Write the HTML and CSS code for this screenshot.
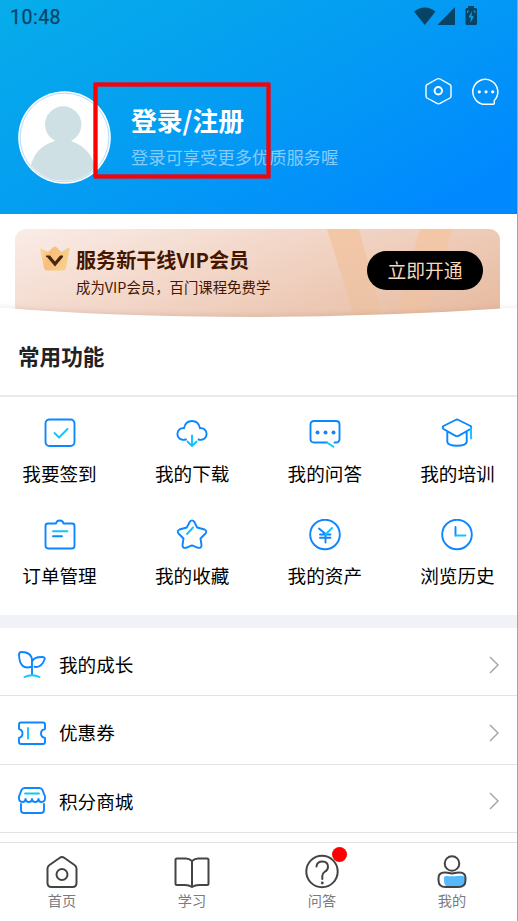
FILE: index.html
```html
<!DOCTYPE html>
<html lang="zh-CN">
<head>
<meta charset="utf-8">
<title>我的</title>
<link rel="stylesheet" href="styles.css">
</head>
<body>
<div class="phone">
  <header class="hero">
    <div class="status">
      <span class="clock">10:48</span>
      <svg class="status-icons" width="66" height="20" viewBox="0 0 66 20" fill="#064365">
        <path d="M0 4.500Q11 -3.500 21.500 4.500L10.800 18Z"/>
        <path d="M23.500 18L41 0V18Z"/>
        <path d="M54 1V-1H60V1H61.500Q63 1 63 2.500V16.500Q63 18 61.500 18H53Q51.500 18 51.500 16.500V2.500Q51.500 1 53 1Z"/>
        <path d="M58 4L54.500 10.500H57L56.300 16L60 9.200H57.500Z" fill="#08a0f2"/>
        <path d="M53.500 6V4H55M59.500 4H61V6" fill="none" stroke="#08a0f2"/>
      </svg>
    </div>
    <div class="tools">
      <svg width="28" height="29" viewBox="0 0 28 29" fill="none" stroke="#fff" stroke-width="1.400" stroke-linejoin="round">
        <path d="M12 2Q13.500 1.200 15 2L25 7.600Q26 8.300 26 9.500V19Q26 20.300 25 21L15 26.400Q13.500 27.200 12 26.400L2 21Q1 20.300 1 19V9.500Q1 8.300 2 7.600Z"/>
        <circle cx="13.300" cy="13.800" r="3.700" stroke-width="2"/>
      </svg>
      <svg width="28" height="29" viewBox="0 0 28 29" fill="none" stroke="#fff" stroke-width="1.500" stroke-linejoin="round">
        <path d="M22.300 23.500A12.500 12.500 0 1 0 14 27.300H21.300Q22.300 27.300 22.300 26.300Z"/>
        <g fill="#fff" stroke="none"><circle cx="7.300" cy="14.800" r="1.600"/><circle cx="14" cy="14.800" r="1.600"/><circle cx="20.700" cy="14.800" r="1.600"/></g>
      </svg>
    </div>
    <div class="profile">
      <svg class="avatar" width="93" height="93" viewBox="0 0 93 93">
        <defs><clipPath id="face"><circle cx="46.500" cy="46.500" r="43.500"/></clipPath></defs>
        <circle cx="46.500" cy="46.500" r="46.300" fill="#fff"/>
        <circle cx="46.500" cy="46.500" r="44.400" fill="none" stroke="#8dccf5" stroke-width=".7"/>
        <g clip-path="url(#face)" fill="#cfe0e5"><circle cx="45.200" cy="33.500" r="18.200"/><path d="M37 46H53V50Q76 58 77.500 82V93H12V78Q16 56 37 50Z"/></g>
      </svg>
      <div class="login">
        <div class="login-title">登录/注册</div>
        <div class="login-sub">登录可享受更多优质服务喔</div>
      </div>
    </div>
    <div class="highlight"></div>
  </header>

  <section class="promo">
    <div class="vip">
      <svg class="ribbon" width="130" height="90" viewBox="0 0 130 90">
        <defs><linearGradient id="rb" x2="0" y2="1"><stop stop-color="#f3c7a6"/><stop offset="1" stop-color="#ecc0a1" stop-opacity=".65"/></linearGradient></defs>
        <path d="M0 0H32L56 90H28Z" fill="url(#rb)"/><path d="M93 0H126L98 90H68Z" fill="url(#rb)"/>
      </svg>
      <svg class="crown" width="30" height="25" viewBox="0 0 30 25">
        <defs><linearGradient id="cr" x2="1" y2=".3"><stop stop-color="#fbdf9f"/><stop offset=".4" stop-color="#f9bd7b"/><stop offset="1" stop-color="#f5d08a"/></linearGradient></defs>
        <path d="M0 3.500Q0 2 1.500 2.500L8 6L13.500 1Q15 0 16.300 1L21.500 6L28 2Q30 1.500 29.500 3.500L26 22Q25.500 24.500 23 24.500H7Q4.500 24.500 4 22Z" fill="url(#cr)"/>
        <path d="M6 9.500H10L15 15.500L20 9.500H23V11L15 20.500L7 11H6Z" fill="#4b2410"/>
      </svg>
      <div class="vip-text">
        <div class="vip-title">服务新干线VIP会员</div>
        <div class="vip-sub">成为VIP会员，百门课程免费学</div>
      </div>
      <div class="vip-btn">立即开通</div>
    </div>
    <svg class="curve" width="518" height="30" viewBox="0 0 518 30">
      <defs><filter id="soft" x="-10%" width="120%" y="-50%" height="200%"><feGaussianBlur stdDeviation="3.500"/></filter></defs>
      <path d="M-20 18Q259 36 538 18V60H-20Z" fill="#80604f" opacity=".26" filter="url(#soft)"/>
      <path d="M0 17.500Q110 27 259 27Q390 26.500 518 17.500V30H0Z" fill="#fff"/>
    </svg>
  </section>

  <h2 class="heading">常用功能</h2>

  <section class="services">
    <div class="service">
      <svg class="icon" viewBox="0 0 32 32"><rect x="1.500" y="2.500" width="29" height="26.500" rx="4"/><path class="cyan" d="M10.500 16L15 20.500L23.500 12"/></svg>
      <span>我要签到</span>
    </div>
    <div class="service">
      <svg class="icon" viewBox="0 0 32 32"><path d="M10 22.500Q8 23 6.500 22.800A5.800 5.800 0 0 1 8 11.200Q9.500 4 16 4Q22.500 4 24 11.200A5.800 5.800 0 0 1 25.500 22.800Q24 23 22.500 22.500"/><path class="cyan" d="M16 18.500V28.500M11.500 24.500L16 29L20.500 24.500"/></svg>
      <span>我的下载</span>
    </div>
    <div class="service">
      <svg class="icon" viewBox="0 0 32 32"><path d="M18 25.500H5Q1.500 25.500 1.500 22V7.500Q1.500 4 5 4H27Q30.500 4 30.500 7.500V22Q30.500 25.500 27 25.500H25.500"/><path class="cyan" d="M18 25.500L24.500 29.800"/><g class="dots"><circle cx="8.500" cy="15.500" r="2"/><circle cx="16.500" cy="15.500" r="2"/><circle cx="24.500" cy="15.500" r="2"/></g></svg>
      <span>我的问答</span>
    </div>
    <div class="service">
      <svg class="icon" viewBox="0 0 32 32"><path d="M14.500 3Q16 2 17.500 3L29.500 9Q31 10.500 29.500 12L17.500 18.800Q16 19.700 14.500 18.800L2.500 12Q1 10.500 2.500 9ZM6.300 14.500V25Q7 28.700 16 28.700Q25 28.700 25.700 25V14.500"/><path class="cyan" d="M30 11V21.500"/></svg>
      <span>我的培训</span>
    </div>
    <div class="service">
      <svg class="icon" viewBox="0 0 32 32"><path d="M4 4.500H12Q12.500 1.500 15.800 1.500Q19 1.500 19.500 4.500H28Q30.500 4.500 30.500 7V26.500Q30.500 29.500 28 29.500H4Q1.500 29.500 1.500 26.500V7Q1.500 4.500 4 4.500ZM9 17.300H18"/><path class="cyan" d="M9 12.300H23.500"/></svg>
      <span>订单管理</span>
    </div>
    <div class="service">
      <svg class="icon" viewBox="0 0 32 32"><path d="M13.800 2.700Q16 0 18.200 2.700L21.200 8.500L28.500 10.500Q31.500 11.800 29.500 14.500L24.500 19.500L25.500 26Q25.500 29.500 22 28.800L16 26.300L10 28.800Q6.500 29.500 6.500 26L7.500 19.500L2.500 14.500Q.5 11.800 3.500 10.500L10.800 8.500Z"/><path class="cyan" d="M11 15L17 8.500"/></svg>
      <span>我的收藏</span>
    </div>
    <div class="service">
      <svg class="icon" viewBox="0 0 32 32"><circle cx="16" cy="15.500" r="14.800"/><path d="M10 9.500L16.500 15V23.500M11 15.500H21.500M11 18.800H21.500"/><path class="cyan" d="M16.500 15.500L23 9"/></svg>
      <span>我的资产</span>
    </div>
    <div class="service">
      <svg class="icon" viewBox="0 0 32 32"><circle cx="16" cy="15.500" r="14.800"/><path d="M14.500 8V16.500"/><path class="cyan" d="M14.500 16.500H24.500"/></svg>
      <span>浏览历史</span>
    </div>
  </section>

  <section class="list">
    <div class="row">
      <svg class="row-icon" viewBox="0 0 28 28"><path d="M1 3.500Q1 1 3.500 1Q14 1 14 10V24M14 15.500Q1.500 20 1 3.500M14 11Q15 6 24 6Q27.500 6 26.500 8.500Q23.500 17 16.500 15.800"/><path class="cyan" d="M6.500 26Q14 22.500 21.500 26"/></svg>
      <span>我的成长</span>
      <svg class="arrow" viewBox="0 0 10 18"><path d="M1 1L9 9L1 17"/></svg>
    </div>
    <div class="row">
      <svg class="row-icon" viewBox="0 0 28 28"><path d="M3 3.500H25Q27 3.500 27 5.500V10Q23 11 23 14.500Q23 18 27 19V23Q27 25 25 25H3Q1 25 1 23V19Q4.500 18 4.500 14.500Q4.500 11 1 10V5.500Q1 3.500 3 3.500Z"/><path class="cyan" d="M10 9V19.500"/></svg>
      <span>优惠券</span>
      <svg class="arrow" viewBox="0 0 10 18"><path d="M1 1L9 9L1 17"/></svg>
    </div>
    <div class="row">
      <svg class="row-icon" viewBox="0 0 28 28"><path d="M3 17V23Q3 26 6 26H23Q26 26 26 23V17M6.500 1H21.500Q23.500 1 24.500 3L27 9.500Q27.500 15 23.500 15Q20.500 15 20.500 12Q20 15 17.300 15Q14 15 14 12Q14 15 10.700 15Q8 15 7.500 12Q7.500 15 4.500 15Q.5 15 1 9.500L3.500 3Q4.500 1 6.500 1Z"/><path class="cyan" d="M7 6.500H21"/></svg>
      <span>积分商城</span>
      <svg class="arrow" viewBox="0 0 10 18"><path d="M1 1L9 9L1 17"/></svg>
    </div>
  </section>

  <nav class="tabs">
    <div class="tab">
      <svg width="36" height="36" viewBox="0 0 36 36"><path d="M15.500 4Q18 2 20.500 4L30.500 11Q32.500 12.500 32.500 14.500V29Q32.500 33 28.500 33H7.500Q3.500 33 3.500 29V14.500Q3.500 12.500 5.500 11Z"/><circle cx="18" cy="20.500" r="5.500"/></svg>
      <span>首页</span>
    </div>
    <div class="tab">
      <svg width="36" height="36" viewBox="0 0 36 36"><path d="M18 7Q15 4.500 12 4.500H3Q1.500 4.500 1.500 6V29.500Q1.500 31 3 31H11Q15 31 18 33Q21 31 25 31H33Q34.500 31 34.500 29.500V6Q34.500 4.500 33 4.500H24Q21 4.500 18 7ZM18 7V33"/></svg>
      <span>学习</span>
    </div>
    <div class="tab">
      <svg width="36" height="36" viewBox="0 0 36 36"><circle cx="18" cy="17.500" r="15.700"/><path d="M12.500 12.500Q13 7.500 18.500 7.500Q24 7.500 24 13Q24 16 20.500 18Q18.300 19.500 18.300 22V25" stroke-linecap="round"/><circle cx="18.300" cy="29" r="1.400" fill="#444" stroke="none"/></svg>
      <span>问答</span>
      <i class="badge"></i>
    </div>
    <div class="tab">
      <svg width="36" height="36" viewBox="0 0 36 36"><path d="M10 24Q10 21.500 13 22Q18 22.800 25 21.800Q31 21 31 24V28Q31 32.500 27 32.500H15Q10 32.500 10 27Z" fill="#55b9fc" stroke="none"/><circle cx="18" cy="9.500" r="7.300"/><path d="M10.500 18.500Q13 18.500 18 19.500Q23 18.500 25.500 18.500Q31.500 18.500 31.500 24V26Q31.500 33 24.500 33H11.500Q4.500 33 4.500 26V24Q4.500 18.500 10.500 18.500Z"/></svg>
      <span>我的</span>
    </div>
  </nav>
</div>
</body>
</html>
```

FILE: styles.css
```css
* { box-sizing: border-box; }
body {
  height: 921px;
  margin: 0;
  overflow: hidden;
  background: #fff;
  font-family: "Noto Sans CJK SC", sans-serif;
  color: #000;
}
svg { display: block; flex: none; }
.phone {
  position: relative;
  display: flex;
  flex-direction: column;
  width: 518px;
  height: 921px;
  overflow: hidden;
  border-right: 1px solid #a4a4a4;
}
.phone > * { flex-shrink: 0; }
.hero {
  position: relative;
  height: 214px;
  background: linear-gradient(150deg, #07ade9 0%, #049bf3 50%, #0089ff 90%);
}
.status {
  display: flex;
  justify-content: space-between;
  height: 34px;
  padding: 7px 37px 0 10px;
}
.status-icons { overflow: visible; }
.clock {
  margin-top: 1px;
  color: #064365;
  font: 400 19.5px/20px Roboto, sans-serif;
  letter-spacing: .5px;
  -webkit-text-stroke: .25px #064365;
}
.tools {
  display: flex;
  justify-content: flex-end;
  gap: 19px;
  height: 57px;
  padding: 43px 17.5px 0 0;
}
.profile { display: flex; padding-left: 18px; }
.login { padding: 10px 0 0 20px; }
.login-title { color: #fff; font-size: 25.8px; line-height: 38px; font-weight: 700; }
.login-sub { color: #86cbfa; font-size: 17.3px; line-height: 24px; margin-top: 6px; }
.highlight {
  position: absolute;
  left: 94px;
  top: 83px;
  width: 176px;
  height: 95px;
  border: 3px solid #f00;
  box-shadow: 0 0 0 1px rgba(235, 0, 20, .65), inset 0 0 0 1px rgba(235, 0, 20, .65);
  border-radius: 1px;
}
.promo { height: 105px; padding: 15px 17px 0 15px; }
.vip {
  position: relative;
  display: flex;
  height: 90px;
  overflow: hidden;
  border-radius: 11px 11px 0 0;
  background: linear-gradient(160deg, #faece7 0%, #f2d5c6 45%, #e6b99e 100%);
}
.ribbon { position: absolute; left: 312px; top: 0; }
.crown { margin: 17px 0 0 25px; }
.vip-text { position: relative; padding: 16px 0 0 6px; color: #451500; white-space: nowrap; }
.vip-title { font-size: 20.1px; line-height: 30px; font-weight: 700; }
.vip-sub { font-size: 14.4px; line-height: 20px; margin-top: 2px; }
.vip-btn {
  position: relative;
  width: 116px;
  height: 39px;
  margin: 22px 17px 0 auto;
  border-radius: 20px;
  background: #000;
  color: #f8d9bb;
  font-size: 18.8px;
  line-height: 38px;
  text-align: center;
}
.curve { position: relative; margin: -29px 0 0 -15px; }
.heading {
  height: 78px;
  margin: 0;
  padding: 20px 0 0 18px;
  border-bottom: 2px solid #eaeaea;
  color: #222;
  font-size: 21.6px;
  line-height: 34px;
  font-weight: 700;
}
.services {
  display: grid;
  grid-template-columns: repeat(4, 76px);
  grid-auto-rows: 102px;
  justify-content: space-between;
  height: 218px;
  padding: 20px 21.5px 0 21.5px;
}
.service {
  display: flex;
  flex-direction: column;
  align-items: center;
  font-size: 18.6px;
  line-height: 28px;
  white-space: nowrap;
}
.icon { width: 32px; height: 32px; margin-bottom: 10px; }
.icon, .row-icon { fill: none; stroke: #0c87ff; stroke-width: 1.9; stroke-linecap: round; stroke-linejoin: round; }
.cyan { stroke: #10c4ff; }
.dots { fill: #0c87ff; stroke: none; }
.list { border-top: 13px solid #f0f2f8; height: 227px; }
.row {
  display: flex;
  align-items: center;
  height: 68.5px;
  padding: 6px 18.5px 0 18px;
  border-bottom: 1px solid #e2e2e2;
  font-size: 18.6px;
  line-height: 28px;
}
.row:first-child { height: 68px; }
.row-icon { width: 28px; height: 28px; margin-right: 13px; }
.row span { margin-top: -1px; }
.arrow { width: 10px; height: 18px; margin-left: auto; fill: none; stroke: #a6a6a6; stroke-width: 1.5; }
.tabs {
  display: flex;
  height: 79px;
  border-top: 1px solid #e2e2e2;
  margin-left: -3px;
  margin-right: -1px;
}
.tab {
  position: relative;
  flex: 0 0 130px;
  display: flex;
  flex-direction: column;
  align-items: center;
  padding-top: 11px;
  color: #777b82;
  font-size: 14.2px;
  line-height: 21px;
}
.tab svg { fill: none; stroke: #444; stroke-width: 2; stroke-linejoin: round; }
.badge {
  position: absolute;
  left: 75px;
  top: 4px;
  width: 15px;
  height: 15px;
  border-radius: 50%;
  background: #f00;
}
```
